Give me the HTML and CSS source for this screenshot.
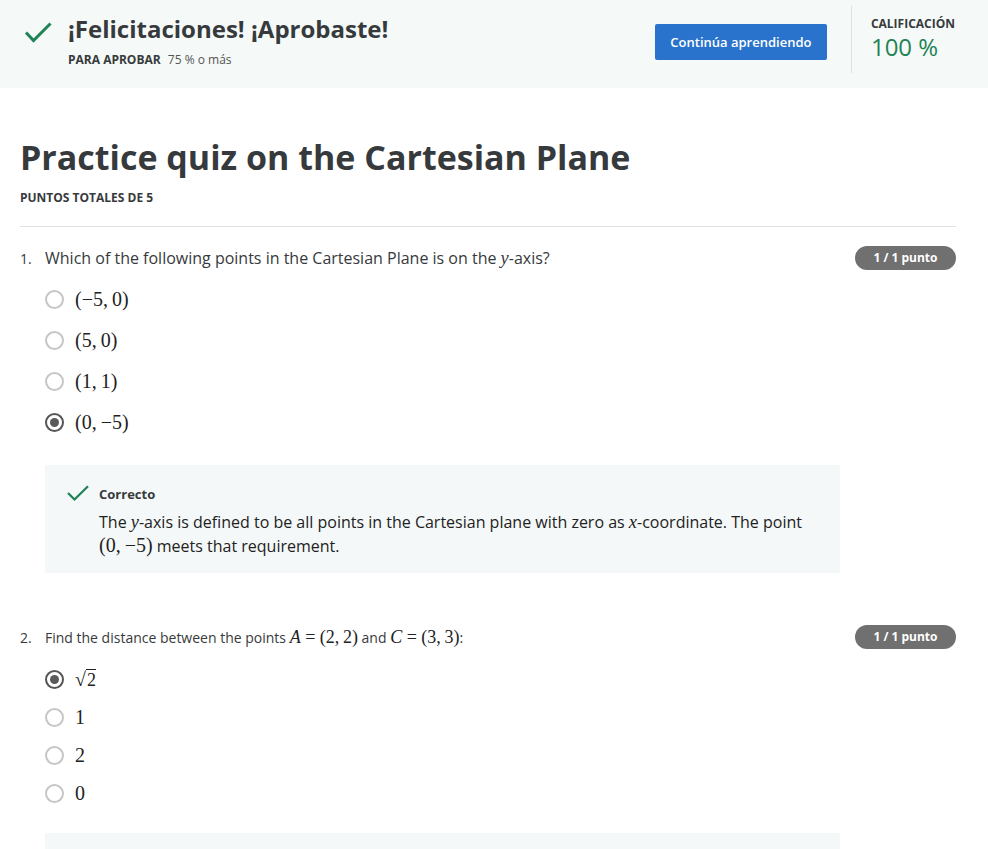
FILE: index.html
```html
<!DOCTYPE html>
<html lang="es">
<head>
<meta charset="utf-8">
<title>Practice quiz on the Cartesian Plane</title>
<link rel="stylesheet" href="styles.css">
</head>
<body>
<header class="banner">
  <svg class="banner-check" width="28" height="22" viewBox="0 0 28 22"><path d="M2 10.5 L9.5 18.5 L26.5 1.5" fill="none" stroke="#1f8354" stroke-width="3"/></svg>
  <div class="banner-text">
    <h2 class="banner-title">¡Felicitaciones! ¡Aprobaste!</h2>
    <div class="banner-sub"><span class="label">PARA APROBAR</span> 75 % o más</div>
  </div>
  <div class="spacer"></div>
  <button class="btn">Continúa aprendiendo</button>
  <div class="divider"></div>
  <div class="grade">
    <div class="label">CALIFICACIÓN</div>
    <div class="grade-value">100 %</div>
  </div>
</header>

<main class="content">
  <h1 class="title">Practice quiz on the Cartesian Plane</h1>
  <div class="total">PUNTOS TOTALES DE 5</div>
  <hr class="rule">

  <section class="question">
    <div class="q-head">
      <span class="q-num">1.</span>
      <span class="q-text q-text-lg">Which of the following points in the Cartesian Plane is on the <span class="mi">y</span>-axis?</span>
      <span class="badge">1 / 1 punto</span>
    </div>
    <ul class="options">
      <li class="opt"><span class="radio"></span><span class="math">(−5,&thinsp;0)</span></li>
      <li class="opt"><span class="radio"></span><span class="math">(5,&thinsp;0)</span></li>
      <li class="opt"><span class="radio"></span><span class="math">(1,&thinsp;1)</span></li>
      <li class="opt"><span class="radio checked"></span><span class="math">(0,&thinsp;−5)</span></li>
    </ul>
    <div class="feedback">
      <svg class="fb-check" width="22" height="17" viewBox="0 0 22 17"><path d="M1 8 L7.5 14.5 L21 1.2" fill="none" stroke="#1f8354" stroke-width="2.3"/></svg>
      <div class="fb-body">
        <div class="fb-title">Correcto</div>
        <p class="fb-text">The <span class="mi">y</span>-axis is defined to be all points in the Cartesian plane with zero as <span class="mi">x</span>-coordinate. The point <span class="math">(0,&thinsp;−5)</span> meets that requirement.</p>
      </div>
    </div>
  </section>

  <section class="question q2">
    <div class="q-head">
      <span class="q-num">2.</span>
      <span class="q-text">Find the distance between the points <span class="math"><span class="mi">A</span> = (2,&thinsp;2)</span> and <span class="math"><span class="mi">C</span> = (3,&thinsp;3)</span>:</span>
      <span class="badge">1 / 1 punto</span>
    </div>
    <ul class="options options-tight">
      <li class="opt"><span class="radio checked"></span><span class="math">√<span class="rad">2</span></span></li>
      <li class="opt"><span class="radio"></span><span class="math">1</span></li>
      <li class="opt"><span class="radio"></span><span class="math">2</span></li>
      <li class="opt"><span class="radio"></span><span class="math">0</span></li>
    </ul>
    <div class="feedback feedback-cut"></div>
  </section>
</main>
</body>
</html>
```
FILE: styles.css
```css
* { box-sizing: border-box; }
html, body { margin: 0; padding: 0; background: #fff; }
body {
  font-family: "Open Sans", "Noto Sans", sans-serif;
  color: #373a3c;
  overflow: hidden;
}
.banner {
  display: flex;
  align-items: flex-start;
  height: 88px;
  padding: 0 33px 0 24px;
  background: #f5f9f8;
}
.banner-check { margin-top: 22px; flex: none; }
.banner-text { margin-left: 16px; padding-top: 12px; }
.banner-title {
  margin: 0;
  font-size: 24px;
  font-weight: 700;
  line-height: 34px;
  color: #373a3c;
}
.banner-sub {
  margin-top: 5px;
  font-size: 12px;
  line-height: 18px;
  color: #555;
}
.label {
  font-size: 12px;
  font-weight: 700;
  color: #373a3c;
  margin-right: 4px;
}
.spacer { flex: 1; }
.btn {
  margin-top: 24px;
  width: 172px;
  height: 36px;
  border: none;
  border-radius: 2px;
  background: #2a73cc;
  color: #fff;
  font-family: inherit;
  font-size: 13px;
  font-weight: 600;
}
.divider {
  width: 1px;
  height: 67px;
  margin: 6px 19px 0 24px;
  background: #dfe2e2;
}
.grade { padding-top: 15px; }
.grade .label { display: block; line-height: 18px; margin: 0; }
.grade-value {
  font-size: 24px;
  line-height: 28px;
  color: #1f8354;
}

.content { padding: 0 32px 0 20px; }
.title {
  margin: 45px 0 0;
  font-size: 34px;
  font-weight: 700;
  line-height: 48px;
  color: #373a3c;
}
.total {
  margin-top: 9px;
  font-size: 12px;
  font-weight: 700;
  line-height: 16px;
}
.rule {
  margin: 20px 0 0;
  border: none;
  border-top: 1px solid #e1e1e1;
}

.question { margin-top: 19px; }
.q2 { margin-top: 52px; }
.q-head {
  display: flex;
  align-items: center;
  min-height: 24px;
}
.q-num { width: 25px; font-size: 14px; }
.q-text { flex: 1; font-size: 14px; line-height: 22px; }
.q-text-lg { font-size: 16px; }
.badge {
  flex: none;
  width: 101px;
  height: 24px;
  border-radius: 12px;
  background: #707070;
  color: #fff;
  font-size: 12px;
  font-weight: 700;
  line-height: 24px;
  text-align: center;
}
.mi, .math {
  font-family: "Liberation Serif", "DejaVu Serif", serif;
}
.mi { font-style: italic; font-size: 1.15em; }
.math { font-size: 20px; color: #222; }
.q-text .math { font-size: 18px; }
.math .mi { font-size: 1em; }

.options { list-style: none; margin: 9px 0 0 25px; padding: 0; }
.opt {
  display: flex;
  align-items: center;
  height: 41px;
}
.options-tight { margin-top: 11px; }
.options-tight .opt { height: 38px; }
.radio {
  flex: none;
  width: 19px;
  height: 19px;
  margin-right: 11px;
  border: 2px solid #c6c6c6;
  border-radius: 50%;
  display: flex;
  align-items: center;
  justify-content: center;
}
.radio.checked { border: 2.5px solid #555; }
.radio.checked::after {
  content: "";
  width: 9px;
  height: 9px;
  border-radius: 50%;
  background: #5a5a5a;
}
.rad {
  border-top: 1px solid #222;
  padding-left: 1px;
  font-size: 18px;
}

.feedback {
  display: flex;
  margin: 22px 0 0 25px;
  width: 795px;
  padding: 20px 20px 15px 22px;
  background: #f5f8f8;
}
.fb-check { flex: none; margin-top: 0; }
.fb-body { margin-left: 10px; }
.fb-title { font-size: 13px; font-weight: 700; line-height: 18px; }
.fb-text {
  margin: 7px 0 0;
  font-size: 16px;
  line-height: 24px;
  color: #222;
}
.fb-text .math { font-size: 20px; line-height: 20px; }
.feedback-cut { height: 40px; margin-top: 21px; padding: 0; }
```
